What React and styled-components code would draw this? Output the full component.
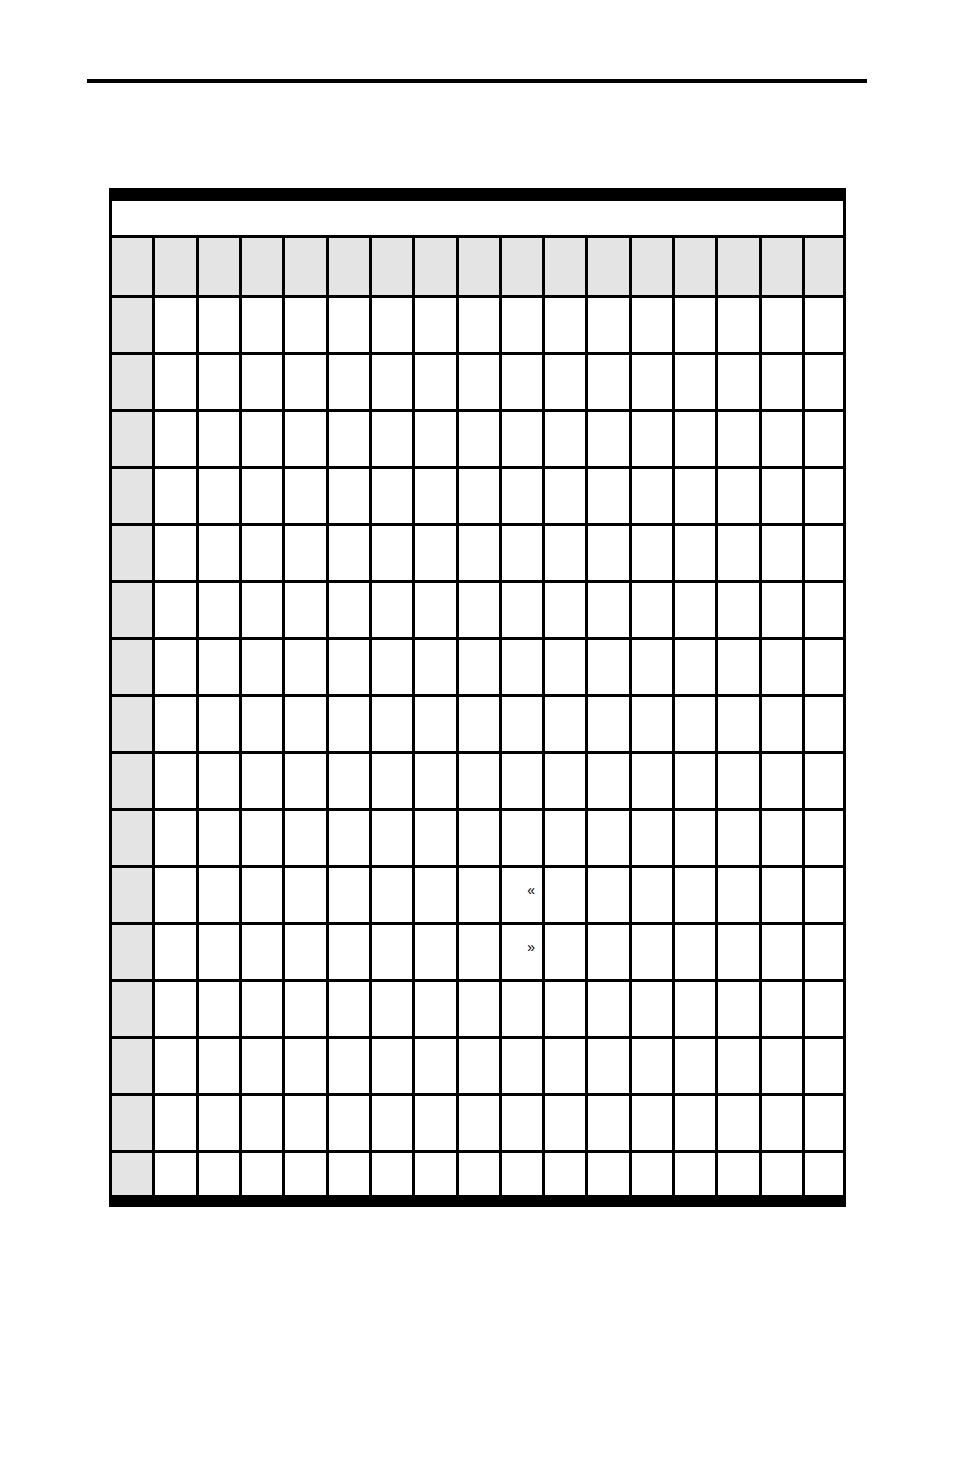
import styled, { createGlobalStyle } from "styled-components";

const GlobalStyle = createGlobalStyle`
  html, body {
    margin: 0;
    padding: 0;
    background: #ffffff;
    font-family: "Liberation Sans", Arial, sans-serif;
  }
`;

const COLS = 16;
const BODY_ROWS = 16;

// marks shown in the grid: [row, col]
const marks = {
  "10-9": "«",
  "11-9": "»",
};

const Page = styled.div`
  width: 954px;
  min-height: 1475px;
  padding-top: 79px;
  box-sizing: border-box;
`;

const Rule = styled.div`
  width: 780px;
  height: 4px;
  margin-left: 87px;
  background: #000;
`;

const Frame = styled.div`
  width: 737px;
  margin: 105px 0 0 109px;
  box-sizing: border-box;
  border-style: solid;
  border-color: #000;
  border-width: 13px 3px 12px 3px;
`;

const Grid = styled.div`
  display: grid;
  grid-template-columns: repeat(${COLS}, 1fr) 38px;
  grid-template-rows: 34px 57px repeat(${BODY_ROWS - 1}, 54px) 42px;
  gap: 3px;
  background: #000;
`;

const Title = styled.div`
  grid-column: 1 / -1;
  background: #fff;
`;

const Cell = styled.div`
  background: ${(p) => (p.$shaded ? "#e4e4e4" : "#fff")};
  display: flex;
  justify-content: flex-end;
  align-items: flex-start;
  padding: 15px 7px 0 0;
  font-size: 14px;
  line-height: 1;
  color: #000;
  box-sizing: border-box;
`;

export default function App() {
  return (
    <>
      <GlobalStyle />
      <Page>
        <Rule />
        <Frame>
          <Grid>
            <Title />
            {Array.from({ length: COLS + 1 }, (_, c) => (
              <Cell key={`h-${c}`} $shaded />
            ))}
            {Array.from({ length: BODY_ROWS }, (_, r) =>
              Array.from({ length: COLS + 1 }, (_, c) => (
                <Cell key={`${r}-${c}`} $shaded={c === 0}>
                  {marks[`${r}-${c}`]}
                </Cell>
              ))
            )}
          </Grid>
        </Frame>
      </Page>
    </>
  );
}
